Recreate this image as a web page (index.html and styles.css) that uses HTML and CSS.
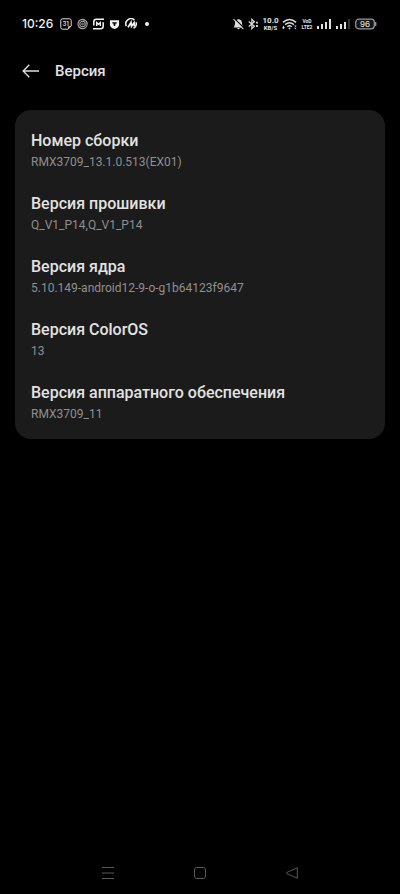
FILE: index.html
```html
<!DOCTYPE html>
<html lang="ru">
<head>
<meta charset="utf-8">
<meta name="viewport" content="width=device-width, initial-scale=1">
<title>Версия</title>
<link rel="stylesheet" href="styles.css">
</head>
<body>
<div class="status">
  <div class="status-left">
    <time class="clock">10:26</time>
    <svg width="12" height="12" viewBox="0 0 12 12" fill="none" stroke="#ddd"><path d="M2.500.8h7A1.700 1.700 0 0 1 11.200 2.500V8L8 11.200H2.500A1.700 1.700 0 0 1 .8 9.500v-7A1.700 1.700 0 0 1 2.500.8z" stroke-width="1"/><path d="M11 8.500H8.500V11" stroke-width=".8"/><text x="5.700" y="8" class="glyph-text" font-size="6">31</text></svg>
    <svg width="11" height="12" viewBox="0 0 12 12" fill="none" stroke="#aaa"><circle cx="6" cy="6" r="5" stroke-width="1.200"/><circle cx="6" cy="6" r="3" stroke-width="1.200"/><circle cx="6" cy="6" r="1" stroke-width="1"/><path d="M6 3a3 3 0 0 1 5 3" stroke-width=".7"/></svg>
    <svg width="11" height="12" viewBox="0 0 12 12" fill="none" stroke="#f2f2f2" stroke-width="1.700"><path d="M12 .9H3.500Q.9.9.9 3.500v4.200M0 11.100h8.500q2.600 0 2.600-2.600V4"/><path d="M4 8.300V4.500l2 1.800 2-1.800v3.800" stroke-width="1.500"/></svg>
    <svg width="11" height="12" viewBox="0 0 12 12"><path fill="#f2f2f2" d="M1 1.800h10v4.900Q11 9.500 6 11.500 1 9.500 1 6.700z"/><path fill="#000" d="M3.600 4h4.800v1.500H7v2L6 8.300l-1-.8v-2H3.600z"/></svg>
    <svg width="12" height="12" viewBox="0 0 14 14" fill="none" stroke="#f2f2f2"><path d="M1.500 9.500A6 6 0 0 1 11 2.500M12.800 5A6 6 0 0 1 10 12" stroke-width="1.800"/><path d="M3.500 11 7 5l.6 4.600L10.600 5.500l.2 4" stroke-width="2"/></svg>
    <span class="dot"></span>
  </div>
  <div class="status-right">
    <svg width="11" height="12" viewBox="0 0 12 12"><path fill="#ddd" d="M1 9.200q1.200-1 1.200-4.200Q2.200 1.800 5 1.200 6-.2 7 1.200q2.800.6 2.800 3.800T11 9.200v.6H1zM4.600 10.300h2.800Q7 11.800 6 11.800t-1.400-1.500z"/><path d="M1.500 0 12 10.500" stroke="#000" stroke-width="1.300"/><path d="m.5.7 10.800 10.800" stroke="#ddd" stroke-width="1.100"/></svg>
    <svg width="11" height="12" viewBox="0 0 12 12" fill="none" stroke="#ddd"><path d="m.8 3.300 6.200 5.200-2.800 2.600V.9L7 3.500.8 8.700" stroke-width="1.300"/><path d="M9.800 3.500v2M9.800 7.200v2" stroke-width="2"/></svg>
    <span class="speed"><b>10.0</b><small>KB/S</small></span>
    <svg width="15" height="12" viewBox="0 0 16 12" fill="none" stroke="#ddd"><path d="M1 4.200q7-6 14 0M3.300 6.700q4.700-4 9.400 0M5.700 8.900q2.300-2 4.600 0" stroke-width="1.600"/><circle cx="8" cy="10.700" r="1" fill="#ddd" stroke="none"/><path d="M.3 10 1.600 7.500 2.800 10l-1.200 1.500zM13 7.500h2.600l-1.300 1.700zM13 10h2.600l-1.300 1.700z" fill="#ddd" stroke="none"/></svg>
    <span class="volte"><span>VoD</span><span>LTE2</span></span>
    <svg class="signal" width="14" height="10" viewBox="0 0 14 10" fill="#e2e2e2"><path d="M0 7h2v3H0zM4 5h2v5H4zM8 3h2v7H8zM12 0h2v10h-2z"/></svg>
    <svg class="signal" width="14" height="10" viewBox="0 0 14 10" fill="#e2e2e2"><path d="M0 7h2v3H0zM4 5h2v5H4zM8 3h2v7H8z"/><path fill="#333" d="M12 0h2v10h-2z"/></svg>
    <svg width="22" height="12" viewBox="0 0 22 12"><rect x=".7" y="1.200" width="18.600" height="9.600" rx="3" fill="#161616" stroke="#999" stroke-width="1.200"/><path d="M20.700 4v4" stroke="#999" stroke-width="1.300"/><text x="10" y="9" class="glyph-text level" font-size="8">96</text></svg>
  </div>
</div>
<header class="bar">
  <button class="back" aria-label="Назад"><svg width="18" height="14" viewBox="0 0 18 14" fill="none" stroke="#e0e0e0" stroke-width="1.300"><path d="M17 7H1.300M7.300.8 1.100 7l6.200 6.200"/></svg></button>
  <h1>Версия</h1>
</header>
<main>
  <dl class="card">
    <div class="item"><dt>Номер сборки</dt><dd>RMX3709_13.1.0.513(EX01)</dd></div>
    <div class="item"><dt>Версия прошивки</dt><dd>Q_V1_P14,Q_V1_P14</dd></div>
    <div class="item"><dt>Версия ядра</dt><dd>5.10.149-android12-9-o-g1b64123f9647</dd></div>
    <div class="item"><dt>Версия ColorOS</dt><dd>13</dd></div>
    <div class="item"><dt>Версия аппаратного обеспечения</dt><dd>RMX3709_11</dd></div>
  </dl>
</main>
<nav class="nav">
  <button aria-label="Недавние"><svg width="12" height="12" viewBox="0 0 12 12" stroke="#585858"><path d="M0 .5h12M0 6h12M0 11.500h12"/></svg></button>
  <button aria-label="Домой"><svg width="12" height="12" viewBox="0 0 12 12" fill="none" stroke="#585858"><rect x=".5" y=".5" width="11" height="11" rx="2.500"/></svg></button>
  <button aria-label="Назад"><svg width="12" height="12" viewBox="0 0 12 12" fill="none" stroke="#585858" stroke-linejoin="round"><path d="M11.300.8v10.400L.8 6.600V5.400z"/></svg></button>
</nav>
</body>
</html>
```
FILE: styles.css
```css
* {
  box-sizing: border-box;
}

body {
  margin: 0;
  min-height: 100vh;
  display: flex;
  flex-direction: column;
  background: #000;
  color: #e2e2e2;
  font-family: Roboto, "Noto Sans", sans-serif;
}

svg {
  display: block;
  flex: none;
}

button {
  display: flex;
  align-items: center;
  justify-content: center;
  padding: 0;
  border: 0;
  background: none;
}

.status {
  display: flex;
  justify-content: space-between;
  align-items: center;
  height: 48px;
  padding: 0 23px 0 22px;
}

.status-left,
.status-right {
  display: flex;
  align-items: center;
}

.status-left {
  gap: 5px;
}

.status-right {
  gap: 4px;
}

.clock {
  width: 33px;
  font: 500 12px/16px Inter, sans-serif;
  color: #f2f2f2;
}

.dot {
  width: 4px;
  height: 4px;
  margin-left: 3px;
  border-radius: 50%;
  background: #f2f2f2;
}

.glyph-text {
  fill: #ddd;
  stroke: none;
  font-family: Inter, sans-serif;
  font-weight: 600;
  text-anchor: middle;
}

.level {
  font-weight: 500;
}

.speed,
.volte {
  display: flex;
  flex-direction: column;
  align-items: center;
  font-family: Roboto, sans-serif;
  white-space: nowrap;
}

.speed {
  width: 15px;
}

.speed b {
  font-size: 8px;
  line-height: 7px;
  font-weight: 700;
}

.speed small {
  font-size: 6px;
  line-height: 7px;
  font-weight: 700;
}

.volte {
  width: 12px;
  font-size: 5px;
  line-height: 6px;
  font-weight: 700;
}

.signal {
  margin-right: 1px;
}

.bar {
  display: flex;
  align-items: center;
  gap: 15px;
  height: 45px;
  padding: 0 22px;
}

.back {
  width: 18px;
  height: 32px;
}

h1 {
  margin: 0;
  font-size: 15px;
  line-height: 22px;
  font-weight: 500;
}

main {
  flex: 1;
  padding: 17px 15px;
}

.card {
  display: flex;
  flex-direction: column;
  gap: 22px;
  margin: 0;
  padding: 20px 16px 16px;
  border-radius: 16px;
  background: #1b1b1b;
}

.item {
  display: flex;
  flex-direction: column;
  gap: 1px;
}

dt {
  font-size: 16px;
  line-height: 22px;
  font-weight: 500;
}

dd {
  margin: 0;
  font-size: 12px;
  line-height: 18px;
  color: #8f8f8f;
}

.nav {
  display: flex;
  justify-content: center;
  gap: 60px;
  height: 42px;
}

.nav button {
  width: 32px;
}
```
